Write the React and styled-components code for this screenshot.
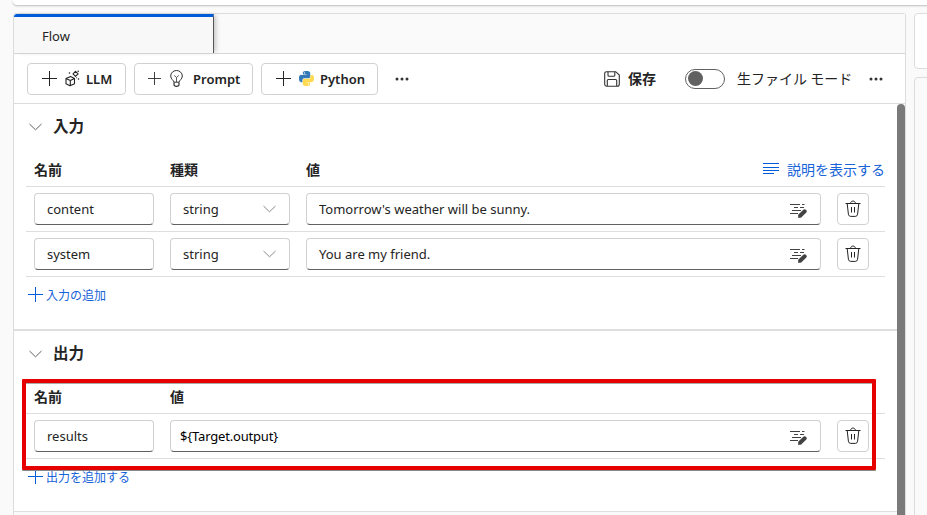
import React from "react";
import styled, { createGlobalStyle } from "styled-components";

const Global = createGlobalStyle`
  *, *::before, *::after { box-sizing: border-box; }
  html, body { margin: 0; height: 515px; overflow: hidden; background: #fafafa; }
  body { font-family: "Noto Sans", "Noto Sans CJK JP", sans-serif; font-size: 13px; color: #242424; }
  svg { display: block; flex: none; }
`;

const Page = styled.div`
  position: relative;
  display: flex;
  gap: 8px;
  width: 927px;
  height: 515px;
  padding-left: 13px;
  overflow: hidden;
`;
const MainColumn = styled.div`
  display: flex;
  flex-direction: column;
  gap: 8px;
  width: 893px;
`;
const TopCard = styled.div`
  width: 930px;
  height: 5px;
  flex: none;
  background: #fff;
  border-radius: 0 0 4px 4px;
  box-shadow: 0 1px 2px #bdbdbd;
`;
const Panel = styled.main`
  height: 510px;
  border: 1px solid #dcdcdc;
  border-bottom: 0;
  border-radius: 3px 3px 0 0;
  background: #fff;
`;
const TabBar = styled.div`
  height: 40px;
  background: #fafafa;
  border-bottom: 1px solid #d6d6d6;
`;
const Tab = styled.div`
  width: 200px;
  height: 39px;
  padding-left: 28px;
  line-height: 39px;
  background: #f8f8f8;
  border-top: 3px solid #015cda;
  border-right: 1px solid #555;
  border-radius: 3px 0 0 0;
  box-shadow: 3px 0 4px -1px #c8c8c8;
`;
const Toolbar = styled.div`
  display: flex;
  align-items: center;
  height: 50px;
  padding: 0 13px;
  border-bottom: 1px solid #dcdcdc;
`;
const ToolButton = styled.button`
  display: flex;
  align-items: center;
  width: ${(p) => p.$width}px;
  height: 32px;
  margin-right: 8px;
  padding: 0 0 0 ${(p) => p.$inset}px;
  border: 1px solid #d1d1d1;
  border-radius: 4px;
  background: #fff;
  color: #242424;
  font: 600 13px "Noto Sans", sans-serif;
`;
const ButtonIcon = styled.span`
  display: flex;
  justify-content: center;
  width: 16px;
  margin: 0 ${(p) => p.$gap}px 0 7px;
`;
const OverflowIcon = styled.span`
  margin: 0 ${(p) => p.$after || 0}px 0 9px;
`;
const Spread = styled.div`
  flex: 1;
`;
const SaveLabel = styled.span`
  margin: 0 29px 0 8px;
  padding-bottom: 2px;
  font: 700 14px "Noto Sans CJK JP", sans-serif;
`;
const Toggle = styled.span`
  display: flex;
  align-items: center;
  width: 40px;
  height: 20px;
  padding-left: 2px;
  border: 1px solid #616161;
  border-radius: 10px;
  &::before {
    content: "";
    width: 15px;
    height: 15px;
    border-radius: 50%;
    background: #616161;
  }
`;
const ToggleLabel = styled.span`
  width: 116px;
  margin: 0 7px 0 12px;
  padding-bottom: 2px;
  white-space: nowrap;
  font: 14px "Noto Sans CJK JP", sans-serif;
`;
const Body = styled.div`
  display: flex;
  height: 412px;
`;
const Sections = styled.div`
  width: 883px;
`;
const ScrollThumb = styled.div`
  width: 8px;
  height: 412px;
  border-radius: 4px 4px 0 0;
  background: #7a7a7a;
`;
const Section = styled.section`
  height: ${(p) => p.$height}px;
  padding: 0 12px;
  border-bottom: ${(p) => p.$line}px solid #dedede;
`;
const SectionTitle = styled.h2`
  display: flex;
  align-items: center;
  gap: 11px;
  height: 51px;
  margin: 0;
  padding: 0 0 5px 3px;
  font: 700 15.5px "Noto Sans CJK JP", sans-serif;
`;
const TitleText = styled.span`
  padding-bottom: 4px;
`;
const Row = styled.div`
  display: grid;
  grid-template-columns: ${(p) => (p.$typed ? "120px 120px 515px 32px" : "120px 651px 32px")};
  column-gap: 16px;
  align-items: center;
  width: 859px;
  height: ${(p) => (p.$head ? 32 : 45)}px;
  padding-left: 8px;
  padding-bottom: ${(p) => (p.$head ? 4 : 0)}px;
  border-bottom: 1px solid #dedede;
`;
const HeadCell = styled.span`
  font: 700 14px/20px "Noto Sans CJK JP", sans-serif;
`;
const ValueHead = styled.div`
  grid-column: 3 / 5;
  display: flex;
  justify-content: space-between;
  margin-right: 1px;
`;
const DescriptionLink = styled.span`
  display: flex;
  align-items: center;
  gap: 8px;
  margin-right: -17px;
  transform: none;
  color: #1763d8;
  font: 14px/20px "Noto Sans CJK JP", sans-serif;
`;
const Field = styled.div`
  display: flex;
  align-items: center;
  justify-content: space-between;
  height: 32px;
  padding: 0 13px 0 ${(p) => (p.$code ? 9 : 12)}px;
  border: 1px solid #d1d1d1;
  border-bottom-color: #616161;
  border-radius: 4px;
  color: ${(p) => (p.$code ? "#000" : "#242424")};
  letter-spacing: ${(p) => (p.$code ? -0.18 : 0)}px;
  white-space: nowrap;
`;
const DeleteButton = styled.button`
  display: flex;
  align-items: center;
  justify-content: center;
  width: 32px;
  height: 32px;
  padding: 0 0 2px;
  border: 1px solid #d1d1d1;
  border-radius: 4px;
  background: #fff;
`;
const AddLink = styled.div`
  display: flex;
  align-items: center;
  gap: 3px;
  height: 35px;
  padding-left: 2px;
  color: #1763d8;
  font: 12px "Noto Sans CJK JP", sans-serif;
`;
const NextSection = styled.div`
  height: 4px;
  background: #fafafa;
`;
const SideColumn = styled.div`
  display: flex;
  flex-direction: column;
  gap: 8px;
  width: 20px;
  flex: none;
  padding-top: 13px;
`;
const SideCard = styled.div`
  height: ${(p) => (p.$tall ? 460 : 56)}px;
  flex: none;
  border: 1px solid #dcdcdc;
  border-radius: 4px;
  background: ${(p) => (p.$tall ? "#fafafa" : "#fff")};
`;
const Highlight = styled.div`
  position: absolute;
  left: 22px;
  top: 379px;
  width: 854px;
  height: 91px;
  border: 4px solid #e60000;
  border-radius: 1px;
  box-shadow: 0 1px 0 #888, inset 0 1px 0 #aaa;
`;

const Plus = ({ size = 15, color = "#242424" }) => (
  <svg width={size} height={size} viewBox="0 0 15 15" fill="none" stroke={color}>
    <path d="M7.5 0v15M0 7.5h15" />
  </svg>
);
const Dots = () => (
  <svg width="14" height="4" viewBox="0 0 14 4" fill="#333">
    <circle cx="2" cy="2" r="1.5" />
    <circle cx="7" cy="2" r="1.5" />
    <circle cx="12" cy="2" r="1.5" />
  </svg>
);
const Chevron = ({ color = "#616161" }) => (
  <svg width="13" height="8" viewBox="0 0 13 8" fill="none" stroke={color}>
    <path d="M.5 1l6 5.8 6-5.8" />
  </svg>
);
const Cube = () => (
  <svg width="15" height="17" viewBox="0 0 15 17" fill="none" stroke="#242424" strokeWidth="1.1" strokeLinejoin="round">
    <path d="M1 8.5l4.5-2 4 2v5.3l-4.5 2-4-2zM1 8.5l4.3 2 4.2-2M5.3 10.5v5" />
    <path d="M10.5 1.3l2.6 2.5-2.6 2.5L8 3.8z" />
    <g fill="#242424" stroke="none">
      <circle cx="4.5" cy="3" r=".8" />
      <circle cx="13.2" cy="1.3" r=".8" />
      <circle cx="13.5" cy="9" r=".8" />
      <circle cx="11.5" cy="7.8" r=".5" />
    </g>
  </svg>
);
const Bulb = () => (
  <svg width="13" height="17" viewBox="0 0 13 17" fill="none" stroke="#333">
    <path d="M4 12.2C3.6 10.1.7 9.3.7 6A5.8 5.5 0 0 1 12.3 6c0 3.3-2.9 4.1-3.3 6.2z" />
    <path d="M4 12.2v2.3c0 2.4 5 2.4 5 0v-2.3" strokeWidth="1.2" />
    <path d="M6.5 12V7.5M4.2 5.4l2.3 2.1 2.3-2.1" strokeWidth=".8" />
  </svg>
);
const Python = () => (
  <svg width="15" height="15" viewBox="0 0 24 24">
    <path fill="#3478b8" d="M11.9 0C5.8 0 6.2 2.6 6.2 2.6v2.8H12v.8H3.9S0 5.8 0 11.9s3.4 5.9 3.4 5.9h2.1V15s-.1-3.4 3.4-3.4h5.8s3.3.1 3.3-3.2V3.2S18.5 0 11.9 0z" />
    <path fill="#ffd94f" d="M12.1 24c6.1 0 5.7-2.6 5.7-2.6v-2.8H12v-.8h8.1S24 18.2 24 12.1s-3.4-5.9-3.4-5.9h-2.1V9s.1 3.4-3.4 3.4H9.300S6 12.300 6 15.600v5.200S5.500 24 12.100 24z" />
    <circle cx="8.7" cy="3" r="1" fill="#fff" />
    <circle cx="15.3" cy="21" r="1" fill="#fff" />
  </svg>
);
const Save = () => (
  <svg width="16" height="16" viewBox="0 0 16 16" fill="none" stroke="#333" strokeWidth="1.1">
    <path d="M2.5.7h9.200l3.600 3.400v9.200a2 2 0 0 1-2 2H2.500a2 2 0 0 1-1.800-2V2.500A1.800 1.800 0 0 1 2.500.7z" />
    <path d="M4 .7v3.500q0 1 1 1h4.800q1 0 1-1V.7M3.300 15V9.500q0-1 1-1h7.400q1 0 1 1V15" />
  </svg>
);
const Lines = () => (
  <svg width="16" height="11" viewBox="0 0 16 11" stroke="#015cda">
    <path d="M0 .5h16M0 4.500h16M0 7.500h16M0 10.500h11" />
  </svg>
);
const EditText = () => (
  <svg width="18" height="19" viewBox="0 -2 18 19" fill="none" stroke="#424242">
    <path d="M1 2.500h10M13 2.500h2.500M5 5.500h4M11 5.500h4M3 8.500h9M1 11.500h8" />
    <path d="M15.700 9.300l-4.400 4.200" strokeWidth="4" strokeLinecap="round" />
    <path d="M10 12l-1 4 4-1z" fill="#424242" stroke="none" />
  </svg>
);
const Trash = () => (
  <svg width="16" height="17" viewBox="0 0 16 17" fill="none" stroke="#242424">
    <path d="M.5 3.500h15M5.500 3.300C6 .3 10 .3 10.500 3.300" />
    <path d="M2.200 3.500l1.200 10.700q.3 2.200 2.300 2.200h4.600q2 0 2.300-2.200l1.200-10.700M6.500 7v5.500M9.500 7v5.500" />
  </svg>
);

const inputs = [
  { name: "content", value: "Tomorrow's weather will be sunny." },
  { name: "system", value: "You are my friend." },
];

export default function App() {
  return (
    <>
      <Global />
      <Page>
        <MainColumn>
          <TopCard />
          <Panel>
            <TabBar><Tab>Flow</Tab></TabBar>
            <Toolbar>
              <ToolButton $width={99} $inset={14}>
                <Plus /><ButtonIcon $gap={6}><Cube /></ButtonIcon>LLM
              </ToolButton>
              <ToolButton $width={119} $inset={13}>
                <Plus size={13} /><ButtonIcon $gap={9}><Bulb /></ButtonIcon>Prompt
              </ToolButton>
              <ToolButton $width={117} $inset={14}>
                <Plus /><ButtonIcon $gap={6}><Python /></ButtonIcon>Python
              </ToolButton>
              <OverflowIcon><Dots /></OverflowIcon>
              <Spread />
              <Save />
              <SaveLabel>保存</SaveLabel>
              <Toggle />
              <ToggleLabel>生ファイル モード</ToggleLabel>
              <OverflowIcon $after={9}><Dots /></OverflowIcon>
            </Toolbar>
            <Body>
              <Sections>
                <Section $height={227} $line={2}>
                  <SectionTitle><Chevron /><TitleText>入力</TitleText></SectionTitle>
                  <Row $head $typed>
                    <HeadCell>名前</HeadCell>
                    <HeadCell>種類</HeadCell>
                    <ValueHead>
                      <HeadCell>値</HeadCell>
                      <DescriptionLink><Lines />説明を表示する</DescriptionLink>
                    </ValueHead>
                  </Row>
                  {inputs.map((item) => (
                    <Row key={item.name} $typed>
                      <Field>{item.name}</Field>
                      <Field>string<Chevron color="#8a8a8a" /></Field>
                      <Field>{item.value}<EditText /></Field>
                      <DeleteButton><Trash /></DeleteButton>
                    </Row>
                  ))}
                  <AddLink><Plus color="#015cda" />入力の追加</AddLink>
                </Section>
                <Section $height={181} $line={1}>
                  <SectionTitle><Chevron /><TitleText>出力</TitleText></SectionTitle>
                  <Row $head>
                    <HeadCell>名前</HeadCell>
                    <HeadCell>値</HeadCell>
                  </Row>
                  <Row>
                    <Field>results</Field>
                    <Field $code>{"${Target.output}"}<EditText /></Field>
                    <DeleteButton><Trash /></DeleteButton>
                  </Row>
                  <AddLink><Plus color="#015cda" />出力を追加する</AddLink>
                </Section>
                <NextSection />
              </Sections>
              <ScrollThumb />
            </Body>
          </Panel>
        </MainColumn>
        <SideColumn>
          <SideCard />
          <SideCard $tall />
        </SideColumn>
        <Highlight />
      </Page>
    </>
  );
}
